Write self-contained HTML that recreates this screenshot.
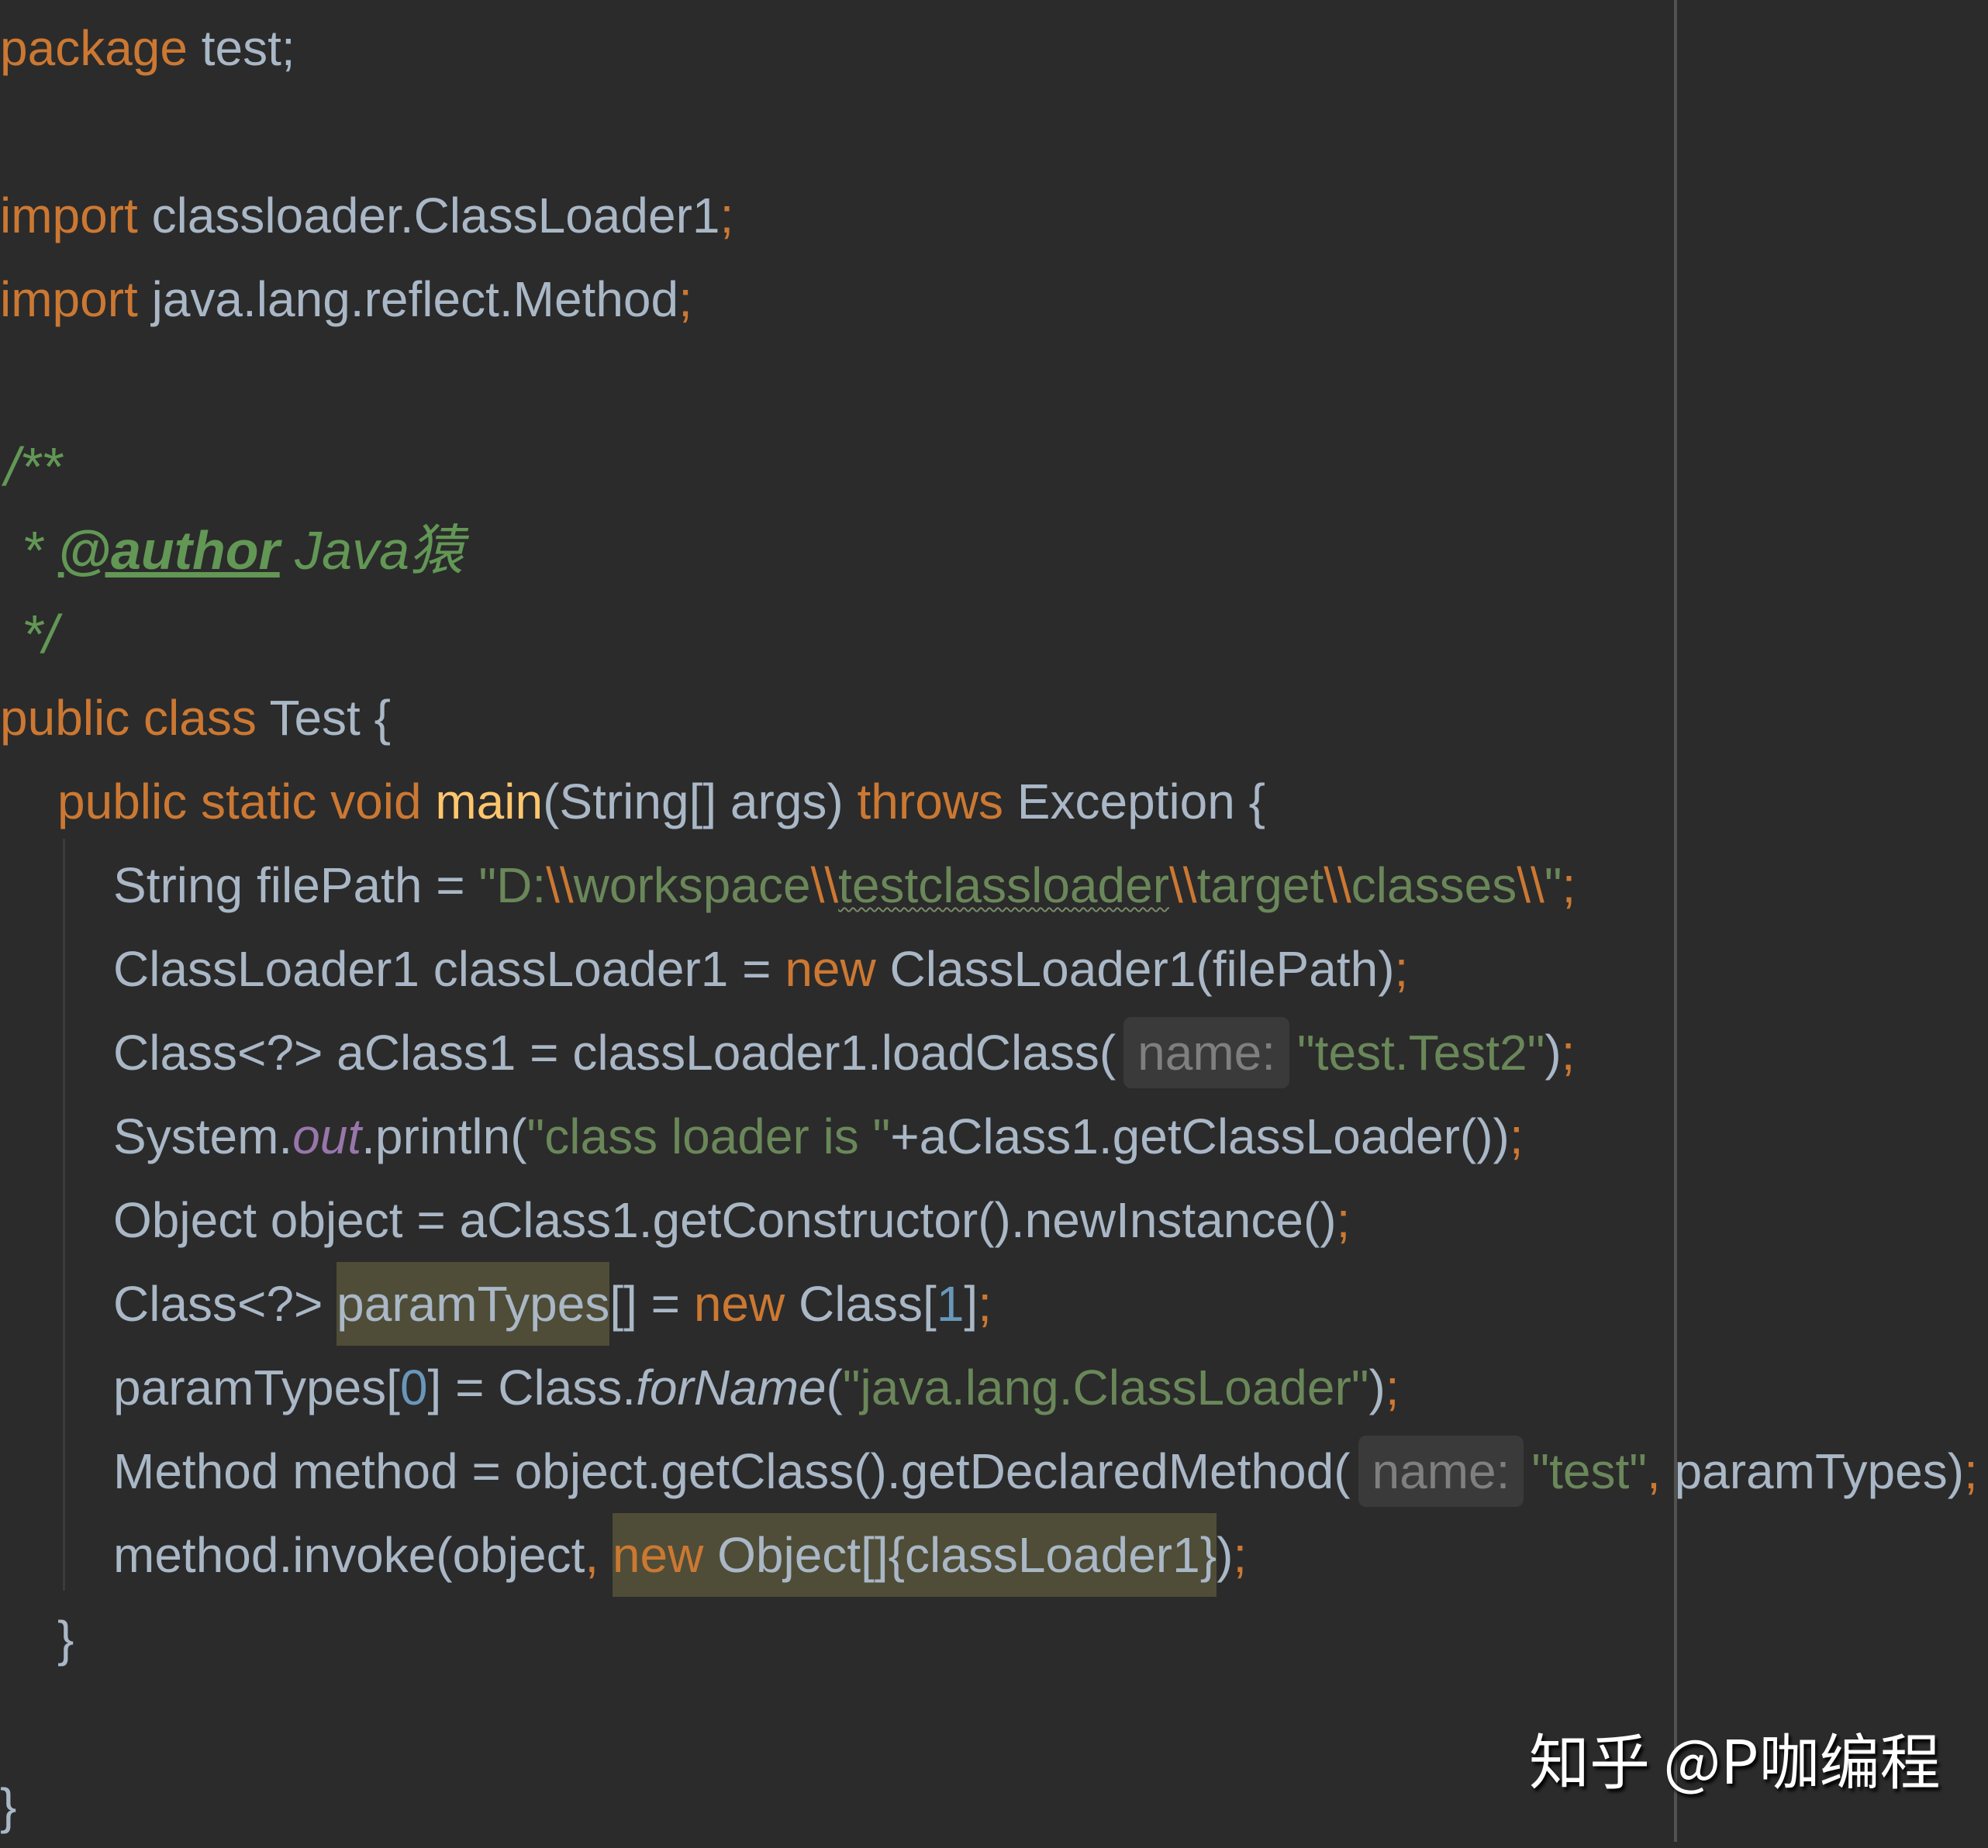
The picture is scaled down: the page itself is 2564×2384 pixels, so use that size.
<!DOCTYPE html>
<html><head><meta charset="utf-8"><style>
html,body{margin:0;padding:0;}
body{width:2564px;height:2376px;background:#2b2b2b;position:relative;overflow:hidden;font-family:"Liberation Sans","Noto Sans CJK SC",sans-serif;font-size:64px;color:#a9b7c6;}
.l{position:absolute;left:0;height:108px;line-height:108px;white-space:pre;}
.k{color:#cc7832}.s{color:#6a8759}.e{color:#cc7832}.n{color:#6897bb}.m{color:#ffc66d}.f{color:#9876aa;font-style:italic}.i{font-style:italic}
.c{color:#629755;font-style:italic;font-size:70px}
.hl{background:#4f4d37;display:inline-block;height:108px;}
.hint{display:inline-block;background:#3a3a3a;color:#7f7f7f;border-radius:10px;height:92px;line-height:92px;padding:0 18px;vertical-align:top;margin-top:8px;}
.w{text-decoration:underline wavy #7a8a6a;text-decoration-thickness:2px;text-underline-offset:6px;}
</style></head><body>
<div style="position:absolute;left:2159px;top:0;width:4px;height:2376px;background:#525252"></div>
<div style="position:absolute;left:81px;top:1082px;width:3px;height:970px;background:#3c3c3c"></div>

<div class="l" style="top:8px"><span class="k">package</span> test;</div>
<div class="l" style="top:224px"><span class="k">import</span> classloader.ClassLoader1<span class="e">;</span></div>
<div class="l" style="top:332px"><span class="k">import</span> java.lang.reflect.Method<span class="e">;</span></div>
<div class="l c" style="top:548px;left:6px">/**</div>
<div class="l c" style="top:656px;left:28px">* <b style="text-decoration:underline">@author</b> Java猿</div>
<div class="l c" style="top:764px;left:28px">*/</div>
<div class="l" style="top:872px"><span class="k">public class</span> Test {</div>
<div class="l" style="top:980px;left:74px"><span class="k">public static void</span> <span class="m">main</span>(String[] args) <span class="k">throws</span> Exception {</div>
<div class="l" style="top:1088px;left:146px">String filePath = <span class="s">"D:<span class="e">\\</span>workspace<span class="e">\\</span><span class="w">testclassloader</span><span class="e">\\</span>target<span class="e">\\</span>classes<span class="e">\\</span>"</span><span class="e">;</span></div>
<div class="l" style="top:1196px;left:146px">ClassLoader1 classLoader1 = <span class="k">new</span> ClassLoader1(filePath)<span class="e">;</span></div>
<div class="l" style="top:1304px;left:146px">Class&lt;?&gt; aClass1 = classLoader1.loadClass(<span class="hint" style="margin-left:10px;margin-right:10px">name:</span><span class="s">"test.Test2"</span>)<span class="e">;</span></div>
<div class="l" style="top:1412px;left:146px">System.<span class="f">out</span>.println(<span class="s">"class loader is "</span>+aClass1.getClassLoader())<span class="e">;</span></div>
<div class="l" style="top:1520px;left:146px">Object object = aClass1.getConstructor().newInstance()<span class="e">;</span></div>
<div class="l" style="top:1628px;left:146px">Class&lt;?&gt; <span class="hl">paramTypes</span>[] = <span class="k">new</span> Class[<span class="n">1</span>]<span class="e">;</span></div>
<div class="l" style="top:1736px;left:146px">paramTypes[<span class="n">0</span>] = Class.<span class="i">forName</span>(<span class="s">"java.lang.ClassLoader"</span>)<span class="e">;</span></div>
<div class="l" style="top:1844px;left:146px">Method method = object.getClass().getDeclaredMethod(<span class="hint" style="margin-left:10px;margin-right:10px">name:</span><span class="s">"test"</span><span class="e">,</span> paramTypes)<span class="e">;</span></div>
<div class="l" style="top:1952px;left:146px">method.invoke(object<span class="e">,</span> <span class="hl"><span class="k">new</span> Object[]{classLoader1}</span>)<span class="e">;</span></div>
<div class="l" style="top:2060px;left:74px">}</div>
<div class="l" style="top:2276px">}</div>

<div style="position:absolute;left:1972px;top:2222px;font-size:78px;line-height:92px;color:#fff;font-family:'Noto Sans CJK SC',sans-serif;text-shadow:3px 4px 4px #000;white-space:pre">知乎 @P咖编程</div>
</body></html>
